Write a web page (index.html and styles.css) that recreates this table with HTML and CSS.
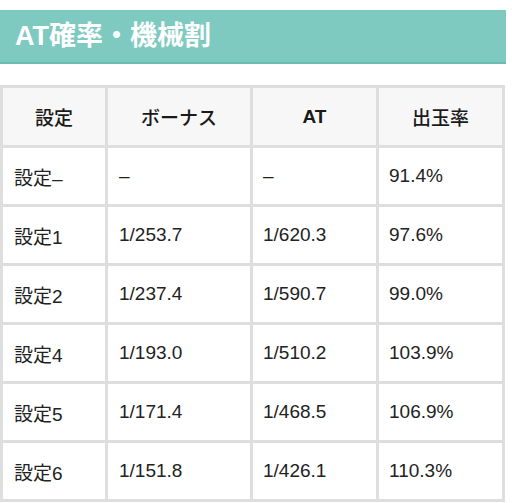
FILE: index.html
```html
<!DOCTYPE html>
<html lang="ja">
<head>
<meta charset="utf-8">
<link rel="stylesheet" href="styles.css">
</head>
<body>
<div class="wrap">
  <h2 class="title">AT確率・機械割</h2>
  <table class="spec">
    <thead>
      <tr><th class="c1 jp">設定</th><th class="c2 jp">ボーナス</th><th class="c3">AT</th><th class="c4 jp">出玉率</th></tr>
    </thead>
    <tbody>
      <tr><td>設定–</td><td>–</td><td>–</td><td>91.4%</td></tr>
      <tr><td>設定1</td><td>1/253.7</td><td>1/620.3</td><td>97.6%</td></tr>
      <tr><td>設定2</td><td>1/237.4</td><td>1/590.7</td><td>99.0%</td></tr>
      <tr><td>設定4</td><td>1/193.0</td><td>1/510.2</td><td>103.9%</td></tr>
      <tr><td>設定5</td><td>1/171.4</td><td>1/468.5</td><td>106.9%</td></tr>
      <tr><td>設定6</td><td>1/151.8</td><td>1/426.1</td><td>110.3%</td></tr>
    </tbody>
  </table>
</div>
</body>
</html>
```
FILE: styles.css
```css
html, body {
  margin: 0;
  padding: 0;
  background: #fff;
}
body {
  font-family: "Liberation Sans", Arial, "Noto Sans CJK JP", sans-serif;
  color: #222;
}
.wrap {
  width: 506px;
  padding-top: 10px;
}
.title {
  margin: 0;
  height: 52px;
  line-height: 52px;
  padding: 0 0 0 15px;
  background: #7ecac1;
  border-bottom: 2px solid #6dbab1;
  color: #fff;
  font-size: 27px;
  font-weight: bold;
  letter-spacing: 0;
}
.spec {
  margin-top: 21px;
  border-collapse: collapse;
  table-layout: fixed;
  width: 505px;
  font-size: 19px;
}
.spec th, .spec td {
  border: 3px solid #dedede;
  padding: 0 10px;
  vertical-align: middle;
  white-space: nowrap;
}
.spec th {
  background: #f7f7f7;
  font-weight: bold;
  text-align: center;
  height: 57px;
  color: #1a1a1a;
}
.spec th.jp {
  font-family: "Noto Sans CJK JP", sans-serif;
  font-weight: 500;
}
.spec td {
  height: 56px;
  text-align: left;
  color: #222;
}
.spec .c1 { width: 82px; }
.spec .c2 { width: 122px; }
.spec .c3 { width: 103px; }
.spec .c4 { width: 103px; }
.spec td:first-child { padding-left: 11px; }
.spec td:nth-child(2) { padding-left: 11px; }
```
